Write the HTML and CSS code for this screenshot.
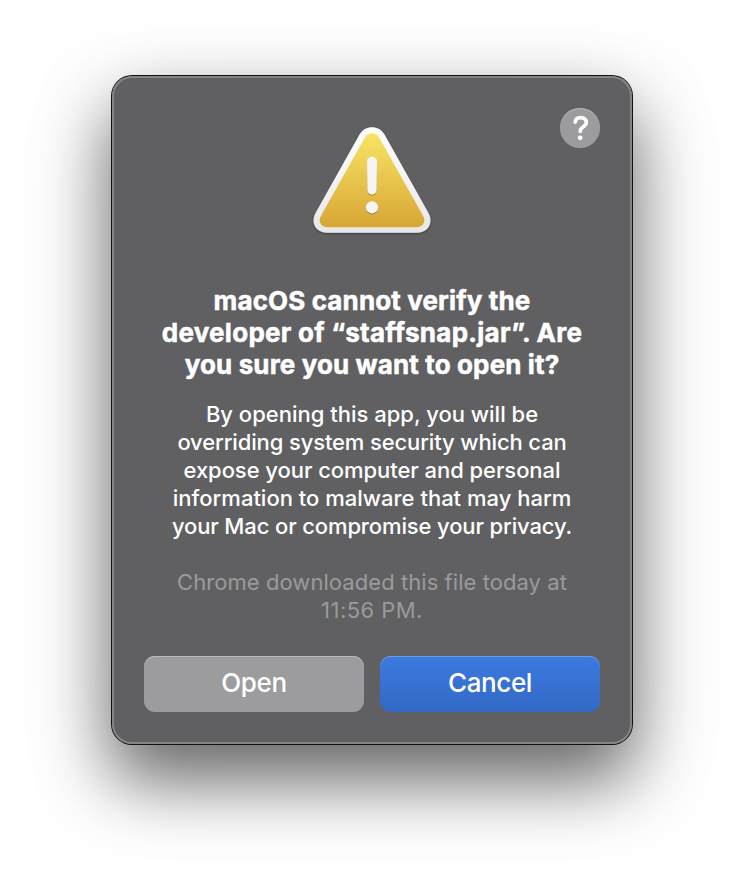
FILE: index.html
```html
<!DOCTYPE html>
<html lang="en">
<head>
<meta charset="utf-8">
<title>Verify developer</title>
<link rel="stylesheet" href="styles.css">
</head>
<body>
<main class="dialog" role="alertdialog" aria-labelledby="title">
  <button class="help" aria-label="Help">
    <svg width="40" height="40" viewBox="0 0 40 40" fill="none">
      <path d="M15.2 14.2C15.500 11 17.300 9.600 20.500 9.600C24 9.600 26.300 11.500 26.300 14.500C26.300 19 20.300 18.700 20.300 23.300" stroke="#fff" stroke-width="3.7" stroke-linecap="round" stroke-linejoin="round"/>
      <circle cx="20.2" cy="29.8" r="2.4" fill="#fff"/>
    </svg>
  </button>
  <svg class="warning" width="128" height="128" viewBox="0 0 128 128">
    <defs>
      <linearGradient id="rim" x1="0" y1="0" x2="0" y2="1"><stop stop-color="#fff"/><stop offset="1" stop-color="#e7e7e7"/></linearGradient>
      <linearGradient id="gold" x1="0" y1="0" x2="0" y2="1"><stop stop-color="#f8e463"/><stop offset="1" stop-color="#d8a636"/></linearGradient>
      <filter id="soft" x="-10%" y="-10%" width="120%" height="125%"><feDropShadow dx="0" dy="1" stdDeviation="1" flood-opacity=".4"/></filter>
      <filter id="mark" x="-50%" y="-20%" width="200%" height="150%"><feDropShadow dx="0" dy="1" stdDeviation=".6" flood-color="#795a13" flood-opacity=".65"/></filter>
    </defs>
    <path filter="url(#soft)" fill="url(#rim)" d="M51.500 18.500C57 8.700 71 8.700 76.500 18.500L120.500 97C126 107.500 119.500 116.700 109 116.700H19C8.500 116.700 2 107.500 7.500 97Z"/>
    <path fill="url(#gold)" d="M57.200 21C60.300 16.100 67.700 16.100 70.800 21L115.200 100C118.300 106 114.800 111.200 108.500 111.200H19.500C13.200 111.200 9.700 106 12.800 100Z"/>
    <g fill="#f5f5f5" filter="url(#mark)">
      <path d="M59 45.500C59 39 69 39 69 45.500L68.500 74C68.200 80 59.800 80 59.500 74Z"/>
      <circle cx="64" cy="91.300" r="6.100"/>
    </g>
  </svg>
  <h1 class="title" id="title"><span>macOS cannot verify the</span><br><span class="loose">developer of “staffsnap.jar”. Are</span><br><span>you sure you want to open it?</span></h1>
  <p class="message">By opening this app, you will be<br><span class="tight">overriding system security which can</span><br><span class="snug">expose your computer and personal</span><br>information to malware that may harm<br><span class="tight">your Mac or compromise your privacy.</span></p>
  <p class="message source">Chrome downloaded this file today at<br><span class="time">11:56 PM.</span></p>
  <div class="actions">
    <button class="button">Open</button>
    <button class="button primary">Cancel</button>
  </div>
</main>
</body>
</html>
```
FILE: styles.css
```css
* { box-sizing: border-box; }
body {
  margin: 0;
  padding: 76px 112px 0;
  height: 892px;
  overflow: hidden;
  background: #fff;
  font-family: Inter, sans-serif;
}
.dialog {
  position: relative;
  width: 520px;
  height: 668px;
  padding: 40px 32px 32px;
  display: flex;
  flex-direction: column;
  align-items: center;
  border-radius: 20px;
  background: #606062;
  color: #fff;
  text-align: center;
  box-shadow:
    inset 0 0 0 2px #858586,
    0 0 0 1px #111,
    0 36px 68px rgba(0, 0, 0, .52),
    0 26px 94px rgba(0, 0, 0, .17);
}
button {
  border: 0;
  padding: 0;
  font-family: inherit;
  color: #fff;
}
.help {
  position: absolute;
  top: 32px;
  right: 32px;
  width: 40px;
  height: 40px;
  border-radius: 50%;
  background: #9c9c9e;
  box-shadow: inset 0 1px #b5b5b6;
}
.help svg { display: block; }
.warning { flex: none; margin-bottom: 41px; }
.title {
  margin: 0 -20px;
  font-size: 26px;
  line-height: 32px;
  font-weight: 700;
  letter-spacing: .13px;
  white-space: nowrap;
  -webkit-text-stroke: .5px #fff;
}
.loose { letter-spacing: .27px; }
.message {
  margin: 19px -20px 0;
  font-size: 22px;
  line-height: 28px;
  font-weight: 500;
  white-space: nowrap;
}
.tight { letter-spacing: -.13px; }
.snug { letter-spacing: -.06px; }
.source {
  margin-top: 28px;
  font-weight: 400;
  letter-spacing: .06px;
  color: #9a9a9c;
}
.time { letter-spacing: .45px; }
.actions {
  display: flex;
  gap: 16px;
  width: 100%;
  margin-top: auto;
}
.button {
  flex: 1;
  height: 56px;
  padding-bottom: 3px;
  border-radius: 11px;
  background: #9c9c9e;
  box-shadow: inset 0 1px #bbbbbc;
  font-size: 26px;
  font-weight: 500;
  letter-spacing: -.4px;
}
.primary {
  background: linear-gradient(#3c7ae0, #3269c5);
  box-shadow: inset 0 1px #6e9ce7;
}
```
